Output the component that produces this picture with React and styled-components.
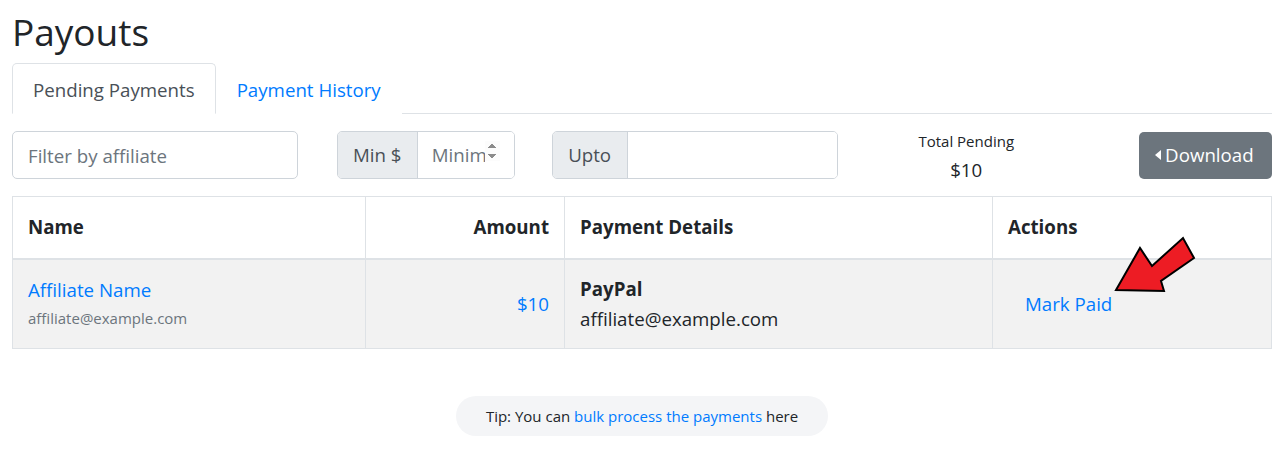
import styled, { createGlobalStyle } from "styled-components";

const GlobalStyle = createGlobalStyle`
  body {
    margin: 0;
    background: #fff;
    color: #212529;
    font-family: "Open Sans", "Liberation Sans", sans-serif;
    font-size: 18.7px;
    line-height: 1.5;
  }
  * { box-sizing: border-box; }
`;

const Page = styled.div`
  position: relative;
  width: 1285px;
  padding: 8px 13px 0 12px;
`;

const Title = styled.h2`
  margin: 0 0 7px;
  font-size: 37px;
  font-weight: 400;
  line-height: 48px;
`;

const Tabs = styled.ul`
  display: flex;
  margin: 0;
  padding: 0;
  list-style: none;
  border-bottom: 1px solid #dee2e6;
`;

const Tab = styled.li`
  margin-bottom: -1px;
  padding: 12px 20px 9px;
  border: 1px solid ${(p) => (p.$active ? "#dee2e6" : "transparent")};
  border-bottom-color: ${(p) => (p.$active ? "#fff" : "transparent")};
  border-radius: 5px 5px 0 0;
  background: #fff;
  color: ${(p) => (p.$active ? "#495057" : "#007bff")};
  cursor: pointer;
`;

const Filters = styled.div`
  display: flex;
  align-items: center;
  margin-top: 17px;
  height: 48px;
`;

const TextInput = styled.input`
  width: ${(p) => p.$w}px;
  height: 48px;
  margin-right: ${(p) => p.$mr || 0}px;
  padding: 0 15px;
  border: 1px solid #ced4da;
  border-radius: 5px;
  font: inherit;
  color: #495057;
  &::placeholder { color: #6c757d; }
`;

const Group = styled.div`
  display: flex;
  width: ${(p) => p.$w}px;
  height: 48px;
  margin-right: ${(p) => p.$mr || 0}px;
  border: 1px solid #ced4da;
  border-radius: 5px;
  overflow: hidden;
`;

const Addon = styled.span`
  display: flex;
  align-items: center;
  justify-content: center;
  width: ${(p) => p.$w}px;
  flex: none;
  background: #e9ecef;
  border-right: 1px solid #ced4da;
  color: #495057;
`;

const GroupInput = styled.input`
  flex: 1;
  min-width: 0;
  border: 0;
  padding: 0 14px 0 14px;
  font: inherit;
  color: #495057;
  outline: none;
  &::placeholder { color: #6c757d; }
  &::-webkit-inner-spin-button,
  &::-webkit-outer-spin-button {
    opacity: 1;
    height: 20px;
  }
`;

const Total = styled.div`
  width: 256px;
  margin-right: 45px;
  padding-top: 5px;
  display: flex;
  flex-direction: column;
  align-items: center;
  line-height: 1.4;
`;

const TotalLabel = styled.span`
  font-size: 15px;
`;

const TotalValue = styled.span`
  font-size: 18.7px;
  margin-top: 5px;
`;

const DownloadButton = styled.button`
  display: flex;
  align-items: center;
  gap: 4px;
  width: 133px;
  height: 47px;
  padding: 0 0 0 16px;
  border: 0;
  border-radius: 5px;
  background: #6c757d;
  color: #fff;
  font: inherit;
  cursor: pointer;
`;

const Table = styled.table`
  width: 100%;
  margin-top: 17px;
  border-collapse: collapse;
  border: 1px solid #dee2e6;
`;

const Th = styled.th`
  height: 62px;
  padding: 0 15px;
  border: 1px solid #dee2e6;
  border-bottom: 2px solid #dee2e6;
  text-align: ${(p) => p.$align || "left"};
  font-weight: 700;
  width: ${(p) => p.$w}px;
`;

const Row = styled.tr`
  background: #f2f2f2;
`;

const Td = styled.td`
  height: 90px;
  padding: 0 15px;
  border: 1px solid #dee2e6;
  text-align: ${(p) => p.$align || "left"};
  vertical-align: middle;
`;

const Link = styled.a`
  color: #007bff;
  text-decoration: none;
`;

const NameLink = styled(Link)`
  display: block;
  margin-top: -3px;
`;

const Muted = styled.div`
  margin-top: 3px;
  font-size: 15px;
  color: #6c757d;
`;

const Strong = styled.div`
  font-weight: 700;
`;

const Plain = styled.div`
  margin-top: 2px;
`;

const ActionLink = styled(Link)`
  margin-left: 17px;
`;

const TipWrap = styled.div`
  display: flex;
  justify-content: center;
  margin-top: 47px;
`;

const Tip = styled.div`
  padding: 8px 30px;
  border-radius: 20px;
  background: #f4f5f7;
  font-size: 15px;
  line-height: 24px;
`;

const Arrow = styled.svg`
  position: absolute;
  left: 1110px;
  top: 232px;
`;

function CaretLeft() {
  return (
    <svg width="6" height="10" viewBox="0 0 6 10">
      <path d="M6 0 L0 5 L6 10 Z" fill="#fff" />
    </svg>
  );
}

export default function App() {
  return (
    <>
      <GlobalStyle />
      <Page>
        <Title>Payouts</Title>
        <Tabs>
          <Tab $active>Pending Payments</Tab>
          <Tab>Payment History</Tab>
        </Tabs>

        <Filters>
          <TextInput $w={286} $mr={39} placeholder="Filter by affiliate" />
          <Group $w={178} $mr={37}>
            <Addon $w={80}>Min $</Addon>
            <GroupInput type="number" placeholder="Minimum" />
          </Group>
          <Group $w={287}>
            <Addon $w={75}>Upto</Addon>
            <GroupInput />
          </Group>
          <Total>
            <TotalLabel>Total Pending</TotalLabel>
            <TotalValue>$10</TotalValue>
          </Total>
          <DownloadButton>
            <CaretLeft />
            Download
          </DownloadButton>
        </Filters>

        <Table>
          <thead>
            <tr>
              <Th $w={353}>Name</Th>
              <Th $w={199} $align="right">Amount</Th>
              <Th $w={428}>Payment Details</Th>
              <Th>Actions</Th>
            </tr>
          </thead>
          <tbody>
            <Row>
              <Td>
                <NameLink href="#">Affiliate Name</NameLink>
                <Muted>affiliate@example.com</Muted>
              </Td>
              <Td $align="right">
                <Link href="#">$10</Link>
              </Td>
              <Td>
                <Strong>PayPal</Strong>
                <Plain>affiliate@example.com</Plain>
              </Td>
              <Td>
                <ActionLink href="#">Mark Paid</ActionLink>
              </Td>
            </Row>
          </tbody>
        </Table>

        <TipWrap>
          <Tip>
            Tip: You can <Link href="#">bulk process the payments</Link> here
          </Tip>
        </TipWrap>

        <Arrow width="90" height="64" viewBox="1110 232 90 64">
          <polygon
            points="1116,290 1140,248 1152,266 1183,238 1194,258 1161,281 1164,291"
            fill="#ed1c24"
            stroke="#000"
            strokeWidth="2"
            strokeLinejoin="miter"
          />
        </Arrow>
      </Page>
    </>
  );
}
